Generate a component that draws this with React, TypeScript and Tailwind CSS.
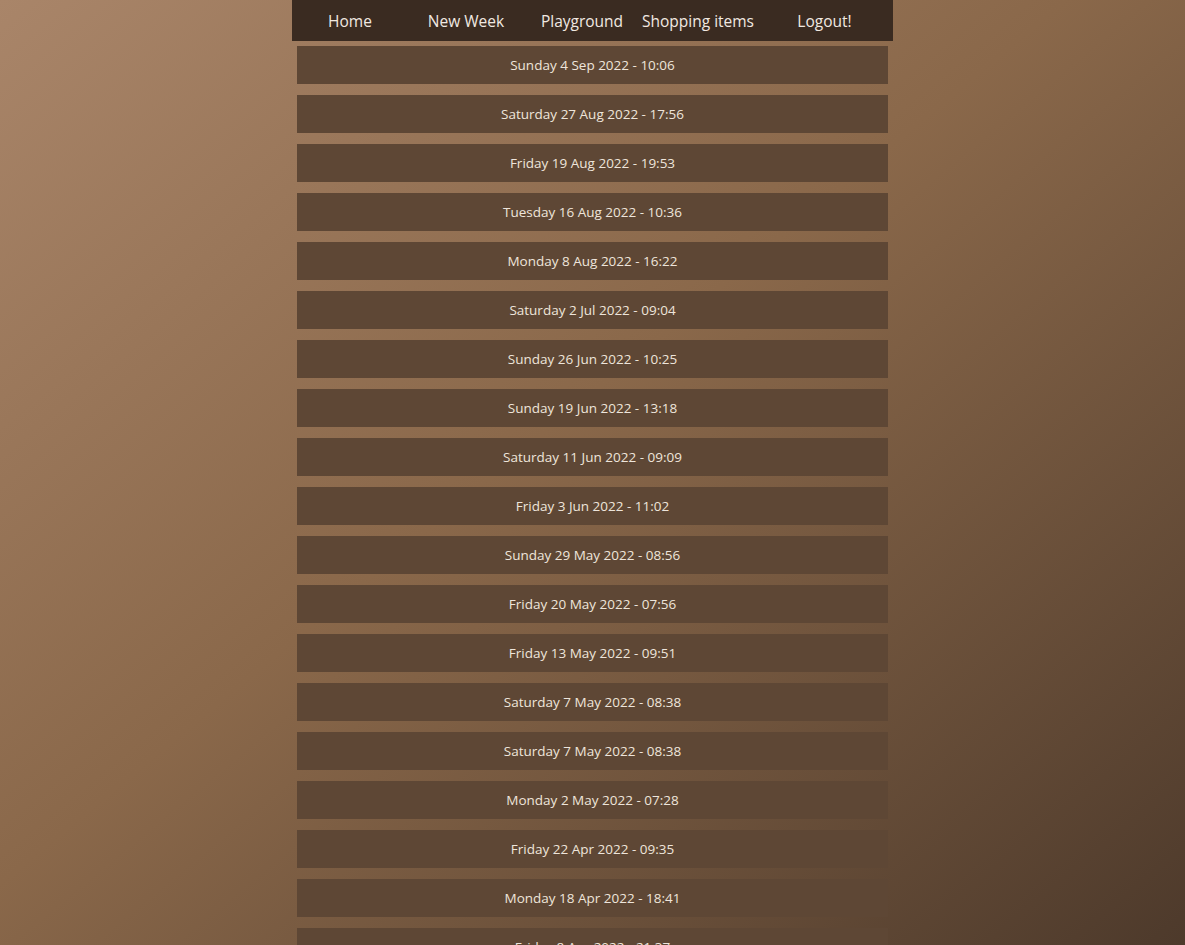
const entries = [
  "Sunday 4 Sep 2022 - 10:06",
  "Saturday 27 Aug 2022 - 17:56",
  "Friday 19 Aug 2022 - 19:53",
  "Tuesday 16 Aug 2022 - 10:36",
  "Monday 8 Aug 2022 - 16:22",
  "Saturday 2 Jul 2022 - 09:04",
  "Sunday 26 Jun 2022 - 10:25",
  "Sunday 19 Jun 2022 - 13:18",
  "Saturday 11 Jun 2022 - 09:09",
  "Friday 3 Jun 2022 - 11:02",
  "Sunday 29 May 2022 - 08:56",
  "Friday 20 May 2022 - 07:56",
  "Friday 13 May 2022 - 09:51",
  "Saturday 7 May 2022 - 08:38",
  "Saturday 7 May 2022 - 08:38",
  "Monday 2 May 2022 - 07:28",
  "Friday 22 Apr 2022 - 09:35",
  "Monday 18 Apr 2022 - 18:41",
  "Friday 8 Apr 2022 - 21:37",
];

export default function App() {
  return (
    <div className="min-h-screen bg-[linear-gradient(to_bottom_right,#a98569,#8a684a_45%,#4b382a)] font-['Open_Sans',sans-serif]">
      <div className="w-[601px] mx-auto">
        {/* Nav */}
        <nav className="flex h-[41px] items-center pt-[2px] bg-[#3a2b21] text-[#f1e9e1] text-[15.5px]">
          <a className="w-[116px] text-center">Home</a>
          <a className="w-[116px] text-center">New Week</a>
          <a className="w-[116px] text-center">Playground</a>
          <a className="w-[116px] text-center">Shopping items</a>
          <a className="flex-1 text-center">Logout!</a>
        </nav>

        {/* Saved weeks */}
        <div className="flex flex-col gap-[11px] px-[5px] pt-[5px] pb-4">
          {entries.map((e, i) => (
            <div
              key={i}
              className="h-[38px] flex items-center justify-center bg-[#5e4735] text-[#eee5db] text-[13.5px]"
            >
              {e}
            </div>
          ))}
        </div>
      </div>
    </div>
  );
}
